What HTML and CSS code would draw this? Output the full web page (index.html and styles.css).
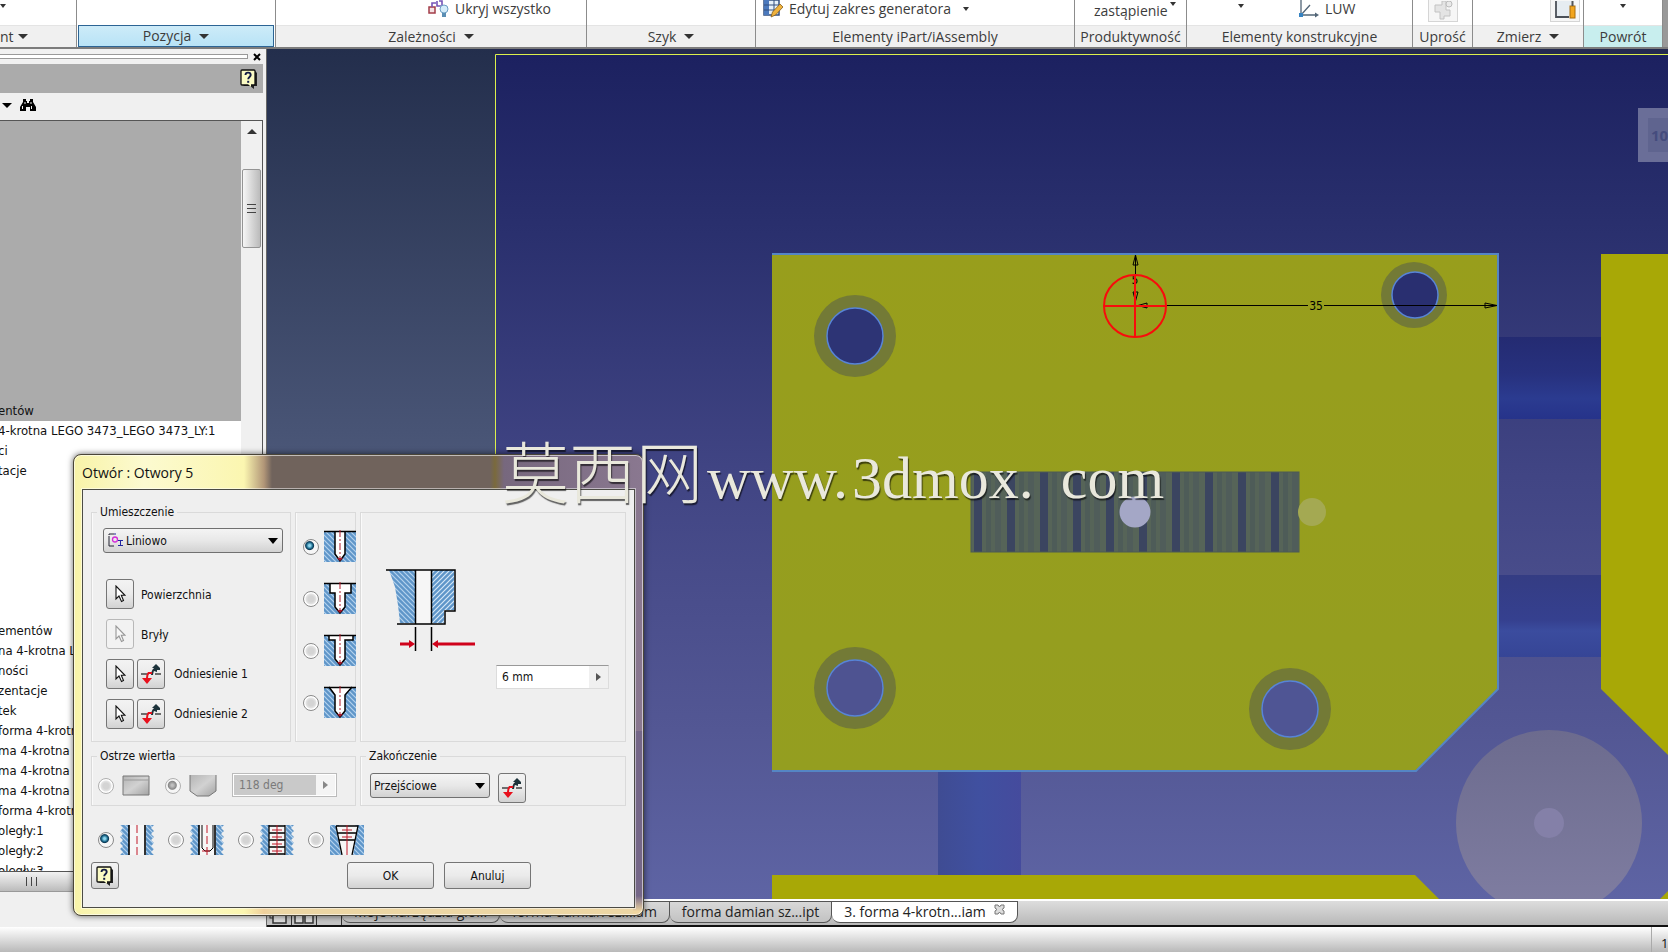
FILE: index.html
```html
<!DOCTYPE html>
<html lang="pl">
<head>
<meta charset="utf-8">
<title>Otwór : Otwory 5</title>
<link rel="stylesheet" href="styles.css">
</head>
<body>
<svg class="defs" aria-hidden="true">
  <defs>
    <pattern id="hatch" width="5" height="5" patternUnits="userSpaceOnUse">
      <rect width="5" height="5" fill="#5f96c9"/>
      <path d="M-1 -1L6 6M-1 4L1 6M4 -1L6 1" stroke="#b4d2ee" stroke-width="1.2"/>
    </pattern>
    <pattern id="hatchBack" width="5" height="5" patternUnits="userSpaceOnUse">
      <rect width="5" height="5" fill="#5f96c9"/>
      <path d="M-1 6L6 -1M-1 1L1 -1M4 6L6 4" stroke="#d6e8f8" stroke-width="1.2"/>
    </pattern>
    <linearGradient id="metal" x1="0" y1="0" x2="1" y2="1">
      <stop offset="0" stop-color="#b4b4b4"/><stop offset=".5" stop-color="#d2d2d2"/><stop offset="1" stop-color="#a2a2a2"/>
    </linearGradient>
    <symbol id="pointer" viewBox="0 0 12 18"><path d="M2 1V14L5 11L7.500 16.500L9.500 15.500L7.300 10.300H11Z" fill="#fff" stroke="#111" stroke-width="1.100"/></symbol>
    <symbol id="flip" viewBox="0 0 22 20">
      <path d="M1 10H8M15 10H21" stroke="#444" stroke-width="1.400"/>
      <path d="M12 11C12.500 7 13 5 15 5" fill="none" stroke="#223038" stroke-width="2"/>
      <path d="M14 7V4H12L16 0L20 4V6H17V8Z" fill="#1d333b"/>
      <path d="M12 9H8.500C7 11 7 12 7 14" fill="none" stroke="#e8101c" stroke-width="2"/>
      <path d="M2 14H12L7 20Z" fill="#e8101c"/>
    </symbol>
    <symbol id="help" viewBox="0 0 18 20">
      <path d="M3 2H15L17 4V17H14V20L10 17H4L2 15Z" fill="#222"/>
      <rect x="1" y="1" width="14" height="15" rx="1" fill="#fbfbc4" stroke="#111" stroke-width="1.300"/>
      <path d="M11 15V18L8 15Z" fill="#fbfbc4"/>
      <path d="M5.500 6C5.500 2.800 10.700 2.800 10.700 6C10.700 8 8.200 8 8.200 10.300" fill="none" stroke="#111a44" stroke-width="1.900"/>
      <rect x="7.200" y="11.800" width="2" height="2" fill="#111a44"/>
    </symbol>
    <symbol id="wall" viewBox="0 0 34 30">
      <path d="M0 0H9V30H0L3 27L0 24L3 21L0 18L3 15L0 12L3 9L0 6L3 3Z" fill="url(#hatch)"/>
      <path d="M25 0H34L31 3L34 6L31 9L34 12L31 15L34 18L31 21L34 24L31 27L34 30H25Z" fill="url(#hatch)"/>
    </symbol>
  </defs>
</svg>

<div class="app">
  <header class="ribbon">
    <section class="panel">
      <div class="tools"><i class="caret small"></i></div>
      <button class="panel-name start">nt <i class="caret"></i></button>
    </section>
    <section class="panel">
      <div class="tools"></div>
      <button class="panel-name active">Pozycja <i class="caret"></i></button>
    </section>
    <section class="panel">
      <div class="tools hide-all">
        <button class="tool"><svg width="21" height="20" viewBox="0 0 21 20"><rect x="1" y="8" width="6" height="6" fill="#f4e2e4" stroke="#a33c48" stroke-width="1.500"/><path d="M4 8V4H8M11 2H14V7H9V2" fill="none" stroke="#7654b8" stroke-width="1.600"/><circle cx="16" cy="10" r="4" fill="#d5edfa" stroke="#6d9fc4"/><rect x="14" y="14" width="4" height="4" fill="#5b8fb4"/></svg>Ukryj wszystko</button>
      </div>
      <button class="panel-name">Zależności <i class="caret"></i></button>
    </section>
    <section class="panel">
      <div class="tools"></div>
      <button class="panel-name">Szyk <i class="caret"></i></button>
    </section>
    <section class="panel">
      <div class="tools generator">
        <button class="tool"><svg width="20" height="19" viewBox="0 0 20 19"><rect x="1" y="0" width="15" height="15" fill="#e6f0fa" stroke="#35507f" stroke-width="1.500"/><path d="M1 0H6V15H1Z" fill="#4b79bd"/><path d="M1 5H16M1 10H16M11 0V15" stroke="#35507f"/><path d="M8 17L9.500 12L17 4L20 7L12.500 15Z" fill="#f0b23c" stroke="#87601c" stroke-width=".8"/></svg>Edytuj zakres generatora<i class="caret small"></i></button>
      </div>
      <div class="panel-name">Elementy iPart/iAssembly</div>
    </section>
    <section class="panel">
      <div class="tools replace"><button class="tool low">zastąpienie<i class="caret small"></i></button></div>
      <div class="panel-name">Produktywność</div>
    </section>
    <section class="panel">
      <div class="tools features">
        <i class="caret small"></i>
        <button class="tool"><svg width="21" height="20" viewBox="0 0 21 20"><path d="M3 0V16H19M3 16L12 6" fill="none" stroke="#526577" stroke-width="1.300"/><rect x="1" y="14" width="4" height="4" fill="#3683c2"/><path d="M17 13.500L21 16L17 18.500Z" fill="#526577"/></svg>LUW</button>
      </div>
      <div class="panel-name">Elementy konstrukcyjne</div>
    </section>
    <section class="panel">
      <div class="tools center"><button class="tool tile" aria-label="Uprość"><svg width="22" height="20" viewBox="0 0 22 20"><path d="M3 4H10V0H14V9H18V15H12V18H8V11H3Z" fill="#e4e4e4" stroke="#c2c2c2"/><circle cx="17" cy="3" r="3" fill="#e9e9e9" stroke="#bbb"/></svg></button></div>
      <div class="panel-name">Uprość</div>
    </section>
    <section class="panel">
      <div class="tools measure"><button class="tool tile" aria-label="Zmierz"><svg width="22" height="20" viewBox="0 0 22 20"><path d="M2 0V16H15" fill="#eef3f7" stroke="#4b5058" stroke-width="1.800"/><path d="M3 0H18V15H3Z" fill="#e6ecf1"/><rect x="16" y="5" width="5" height="12" fill="#f2a51e" stroke="#a86d0d"/><path d="M18.500 0V5" stroke="#555" stroke-width="2"/></svg></button></div>
      <button class="panel-name">Zmierz <i class="caret"></i></button>
    </section>
    <section class="panel">
      <div class="tools center"><i class="caret small"></i></div>
      <div class="panel-name return">Powrót</div>
    </section>
    <div class="ribbon-end"></div>
  </header>

  <div class="work">
    <aside class="browser">
      <div class="grip"><span></span><button aria-label="Zamknij panel"><svg width="8" height="8" viewBox="0 0 8 8"><path d="M1 1L7 7M7 1L1 7" stroke="#000" stroke-width="2"/></svg></button></div>
      <div class="browser-head"><svg width="18" height="20"><use href="#help"/></svg></div>
      <div class="browser-tools">
        <i class="caret dark"></i>
        <svg width="16" height="14" viewBox="0 0 16 14"><path d="M3 1H6V3H7V5H9V3H10V1H13V4L16 9V13H10V9H6V13H0V9L3 4Z"/><path d="M2.500 8V11M11.500 8V11M5 4V6M11 4V6" stroke="#eee"/></svg>
      </div>
      <div class="tree-box">
        <ul class="tree">
          <li class="inactive"><span>entów</span></li>
          <li>4-krotna LEGO 3473_LEGO 3473_LY:1</li>
          <li>ci</li>
          <li>tacje</li>
          <li class="gap"></li>
          <li>ementów</li>
          <li>na 4-krotna LEGO</li>
          <li>ności</li>
          <li>zentacje</li>
          <li>tek</li>
          <li>forma 4-krotna</li>
          <li>ma 4-krotna LEGO</li>
          <li>ma 4-krotna LEGO</li>
          <li>ma 4-krotna LEGO</li>
          <li>forma 4-krotna</li>
          <li>oległy:1</li>
          <li>oległy:2</li>
          <li>oległy:3</li>
        </ul>
        <div class="vscroll"><i class="up"></i><div class="thumb"><i></i><i></i><i></i></div></div>
      </div>
      <div class="hscroll"><i></i><i></i><i></i></div>
    </aside>

    <main class="stage">
      <svg class="model" viewBox="267 49 1401 850" preserveAspectRatio="xMinYMin slice">
        <defs>
          <linearGradient id="outer" x1="0" y1="0" x2="0" y2="1"><stop offset="0" stop-color="#232e4c"/><stop offset=".45" stop-color="#485475"/><stop offset="1" stop-color="#79839f"/></linearGradient>
          <linearGradient id="sky" x1="0" y1="0" x2="0" y2="1"><stop offset="0" stop-color="#1c2160"/><stop offset=".2" stop-color="#292f6d"/><stop offset=".5" stop-color="#414584"/><stop offset=".8" stop-color="#535794"/><stop offset="1" stop-color="#5e64a4"/></linearGradient>
          <linearGradient id="plate" x1="0" y1="0" x2="0" y2="1"><stop offset="0" stop-color="#989e1c"/><stop offset="1" stop-color="#949e20"/></linearGradient>
          <linearGradient id="band1" x1="0" y1="0" x2="0" y2="1"><stop offset="0" stop-color="#242b72"/><stop offset=".45" stop-color="#27317e"/><stop offset=".75" stop-color="#2b3b90"/><stop offset="1" stop-color="#26338a"/></linearGradient>
          <linearGradient id="band2" x1="0" y1="0" x2="0" y2="1"><stop offset="0" stop-color="#343c83"/><stop offset=".55" stop-color="#35408f"/><stop offset=".68" stop-color="#3b4c9e"/><stop offset="1" stop-color="#364596"/></linearGradient>
          <linearGradient id="channel"><stop offset="0" stop-color="#3f4c93"/><stop offset=".5" stop-color="#4050a0"/><stop offset="1" stop-color="#454b9d"/></linearGradient>
          <linearGradient id="disc" x1="0" y1="0" x2="0" y2="1"><stop offset="0" stop-color="#6c6b8e"/><stop offset="1" stop-color="#807ea2"/></linearGradient>
          <pattern id="fins" x="974" y="0" width="33" height="90" patternUnits="userSpaceOnUse"><rect width="33" height="90" fill="#566458"/><rect width="8" height="90" fill="#3b4560"/><rect x="12" width="5" height="90" fill="#4e5c58"/><rect x="21" width="6" height="90" fill="#505d5a"/></pattern>
        </defs>
        <rect x="267" y="48" width="1401" height="851" fill="url(#outer)"/>
        <rect x="492" y="48" width="1176" height="6" fill="#242a50"/>
        <rect x="495" y="54" width="1173" height="845" fill="url(#sky)"/>
        <path d="M495.500 899V54.500H1668" fill="none" stroke="#dcf04c"/>
        <rect x="1499" y="337" width="102" height="82" fill="url(#band1)"/>
        <rect x="1499" y="575" width="102" height="82" fill="url(#band2)"/>
        <rect x="938" y="772" width="83" height="103" fill="url(#channel)"/>
        <path d="M1601 254H1668V755L1601 689Z" fill="#a8a806"/>
        <path d="M772 875H1415L1439 899H772Z" fill="#a8a806"/>
        <path d="M1660 899L1668 891V899Z" fill="#a8a806"/>
        <circle cx="1549" cy="823" r="93" fill="url(#disc)"/>
        <circle cx="1549" cy="823" r="15" fill="#8480a8"/>
        <path d="M772 254H1498V689L1416 771H772Z" fill="url(#plate)"/>
        <path d="M772 254H1498V689L1416 771H772" fill="none" stroke="#5585c4" stroke-width="2"/>
        <g fill="#737a36"><circle cx="855" cy="336" r="41"/><circle cx="1414" cy="295" r="33"/><circle cx="855" cy="688" r="41"/><circle cx="1290" cy="709" r="41"/></g>
        <g stroke="#5784d8" stroke-width="1.500"><circle cx="855" cy="336" r="28" fill="#2d3475"/><circle cx="1415" cy="295" r="23" fill="#292f70"/><circle cx="855" cy="688" r="28" fill="#4e5391"/><circle cx="1290" cy="709" r="28" fill="#4f5594"/></g>
        <rect x="971" y="472" width="328" height="80" fill="url(#fins)" stroke="#4d5a54"/>
        <circle cx="1312" cy="512" r="14" fill="#a4a952"/>
        <circle cx="1135" cy="512" r="15.500" fill="#a4a7c6"/>
        <g stroke="#000" fill="none"><path d="M1135.500 255V274M1135.500 286V300M1139 305.500H1308M1324 305.500H1497"/><path d="M1135.500 255L1133 265H1138ZM1135.500 301L1133 292H1138ZM1138 305.500L1147 303V308ZM1497 305.500L1485 303V308Z"/></g>
        <text class="dim" x="1135" y="284">5</text>
        <text class="dim" x="1316" y="310">35</text>
        <g stroke="#f80c0c" stroke-width="2" fill="none"><circle cx="1135" cy="306" r="31"/><path d="M1104 306H1166M1135 275V337"/></g>
        <rect x="1638" y="108" width="40" height="54" fill="#6a6e98"/>
        <rect x="1648" y="118" width="30" height="34" fill="#5f648f"/>
        <text class="cube" x="1651" y="141">10</text>
      </svg>
      <nav class="tabs">
        <span class="tab-tool"><svg width="20" height="16" viewBox="0 0 20 16"><rect x="1" y="1" width="12" height="8" fill="none" stroke="#333"/><rect x="4" y="4" width="13" height="10" fill="#ddd" stroke="#333" stroke-width="1.500"/></svg></span>
        <span class="tab-tool"><svg width="20" height="16" viewBox="0 0 20 16"><rect x="1" y="4" width="8" height="10" fill="#ddd" stroke="#333" stroke-width="1.500"/><rect x="11" y="4" width="8" height="10" fill="#ddd" stroke="#333" stroke-width="1.500"/></svg></span>
        <span class="tab-tool"></span>
        <a href="#" class="tab">Moje narzędzia gło...</a>
        <a href="#" class="tab">forma damian sz...iam</a>
        <a href="#" class="tab">forma damian sz...ipt</a>
        <a href="#" class="tab current">3. forma 4-krotn...iam <svg width="11" height="11" viewBox="0 0 11 11"><path d="M1 1H4L5.500 3L7 1H10V4L8 5.500L10 7V10H7L5.500 8L4 10H1V7L3 5.500L1 4Z" fill="#ddd" stroke="#777"/></svg></a>
      </nav>
    </main>
  </div>
  <footer class="status"><span>1</span></footer>
</div>

<form class="dialog" onsubmit="return false">
  <h1>Otwór : Otwory 5</h1>
  <div class="dialog-body">
    <div class="upper">
      <fieldset class="placement">
        <legend>Umieszczenie</legend>
        <div class="select wide">
          <svg width="15" height="14" viewBox="0 0 15 14"><path d="M1 3V13H6M1 1V2M1 1H6" fill="none" stroke="#223"/><circle cx="7" cy="6.500" r="2.500" fill="none" stroke="#d32bd8" stroke-width="1.300"/><path d="M10 7.500H15M10 12.500H15M12.500 8V12M7 0V2" stroke="#2226a0"/></svg>
          <select aria-label="Umieszczenie"><option>Liniowo</option></select>
        </div>
        <div class="picks">
          <div class="pick"><button aria-label="Wybierz powierzchnię"><svg width="12" height="18"><use href="#pointer"/></svg></button><span>Powierzchnia</span></div>
          <div class="pick"><button disabled aria-label="Wybierz bryły"><svg width="12" height="18"><use href="#pointer"/></svg></button><span>Bryły</span></div>
          <div class="pick"><button aria-label="Wybierz odniesienie 1"><svg width="12" height="18"><use href="#pointer"/></svg></button><button aria-label="Odwróć 1"><svg width="22" height="20"><use href="#flip"/></svg></button><span class="far">Odniesienie 1</span></div>
          <div class="pick"><button aria-label="Wybierz odniesienie 2"><svg width="12" height="18"><use href="#pointer"/></svg></button><button aria-label="Odwróć 2"><svg width="22" height="20"><use href="#flip"/></svg></button><span class="far">Odniesienie 2</span></div>
        </div>
      </fieldset>
      <fieldset class="shapes" aria-label="Kształt otworu">
        <label><input type="radio" name="shape" checked aria-label="Wiercony"><svg width="32" height="33" viewBox="0 0 32 33"><rect y="1" width="32" height="31" fill="url(#hatch)"/><path d="M11 1V24L16 31L21 24V1" fill="#fff" stroke="#000" stroke-width="1.500"/><path d="M0 1.500H32" stroke="#000" stroke-width="1.500"/><path d="M13 28H19L16 31Z" fill="#a01c30"/><path d="M16 0V30" stroke="#b01828" stroke-dasharray="7 2 2 2"/></svg></label>
        <label><input type="radio" name="shape" aria-label="Pogłębiony walcowo"><svg width="32" height="33" viewBox="0 0 32 33"><rect y="1" width="32" height="31" fill="url(#hatch)"/><path d="M6 1V11H11V25L16 31L21 25V11H27V1" fill="#fff" stroke="#000" stroke-width="1.500"/><path d="M0 1.500H32" stroke="#000" stroke-width="1.500"/><path d="M13 28H19L16 31Z" fill="#a01c30"/><path d="M16 0V30" stroke="#b01828" stroke-dasharray="7 2 2 2"/></svg></label>
        <label><input type="radio" name="shape" aria-label="Pogłębiony płasko"><svg width="32" height="33" viewBox="0 0 32 33"><rect y="1" width="32" height="31" fill="url(#hatch)"/><path d="M5 1V6H11V25L16 31L21 25V6H29V1" fill="#fff" stroke="#000" stroke-width="1.500"/><path d="M0 1.500H32" stroke="#000" stroke-width="1.500"/><path d="M13 28H19L16 31Z" fill="#a01c30"/><path d="M16 0V30" stroke="#b01828" stroke-dasharray="7 2 2 2"/></svg></label>
        <label><input type="radio" name="shape" aria-label="Pogłębiony stożkowo"><svg width="32" height="33" viewBox="0 0 32 33"><rect y="1" width="32" height="31" fill="url(#hatch)"/><path d="M5 1L11 9V25L16 31L21 25V9L28 1" fill="#fff" stroke="#000" stroke-width="1.500"/><path d="M0 1.500H32" stroke="#000" stroke-width="1.500"/><path d="M13 28H19L16 31Z" fill="#a01c30"/><path d="M16 0V30" stroke="#b01828" stroke-dasharray="7 2 2 2"/></svg></label>
      </fieldset>
      <fieldset class="preview" aria-label="Wymiary">
        <svg width="92" height="84" viewBox="0 0 92 84">
          <path d="M3 1H29V54H14L12 36L9 18Z" fill="url(#hatch)"/>
          <path d="M45 1H68V41H58V54H45Z" fill="url(#hatchBack)"/>
          <path d="M29 1H45V54H29Z" fill="#f6f6f6"/>
          <path d="M0 1H69V42H59V55H11M29.500 1V55M45.500 1V55M29.500 58V82M45.500 58V82" fill="none" stroke="#000" stroke-width="1.500"/>
          <path d="M14 75H25M49 75H89" stroke="#d0021b" stroke-width="3"/>
          <path d="M23 71L29 75L23 79ZM52 71L46 75L52 79Z" fill="#d0021b"/>
        </svg>
        <div class="field"><input type="text" value="6 mm" aria-label="Średnica"><button aria-label="Opcje średnicy"></button></div>
      </fieldset>
    </div>
    <div class="middle">
      <fieldset class="drill">
        <legend>Ostrze wiertła</legend>
        <div class="line">
          <label><input type="radio" name="tip" disabled aria-label="Płaskie"><svg width="28" height="22" viewBox="0 0 28 22"><path d="M1 1H27V20H1Z" fill="url(#metal)" stroke="#777"/><path d="M1 5H27" stroke="#999"/></svg></label>
          <label><input type="radio" name="tip" checked disabled aria-label="Kątowe"><svg width="28" height="24" viewBox="0 0 28 24"><path d="M1 1H27V17L20 22H8L1 17Z" fill="url(#metal)"/><path d="M1 1V17L8 22H20L27 17V1" fill="none" stroke="#777"/></svg></label>
          <div class="field off"><input type="text" value="118 deg" disabled aria-label="Kąt ostrza"><button disabled aria-label="Opcje kąta"></button></div>
        </div>
      </fieldset>
      <fieldset class="finish">
        <legend>Zakończenie</legend>
        <div class="line">
          <div class="select"><select aria-label="Zakończenie"><option>Przejściowe</option></select></div>
          <button aria-label="Odwróć kierunek" class="flip"><svg width="22" height="20"><use href="#flip"/></svg></button>
        </div>
      </fieldset>
    </div>
    <div class="kinds">
      <label><input type="radio" name="kind" checked aria-label="Zwykły otwór"><svg width="34" height="30" viewBox="0 0 34 30"><use href="#wall"/><path d="M9 0H26V30H9Z" fill="#f6f6f6"/><path d="M9 0V30M25 0V30" stroke="#000" stroke-width="1.600"/><path d="M17 0V30" stroke="#c01828" stroke-dasharray="8 3"/></svg></label>
      <label><input type="radio" name="kind" aria-label="Otwór przejściowy"><svg width="34" height="30" viewBox="0 0 34 30"><use href="#wall"/><path d="M9 0H26V30H9Z" fill="#f6f6f6"/><path d="M9 0V30M25 0V30" stroke="#000" stroke-width="1.600"/><path d="M12 0V23L15 26H20L23 23V0" fill="none" stroke="#000"/><path d="M17 0V30M12 26H22" stroke="#c01828" stroke-dasharray="8 3"/></svg></label>
      <label><input type="radio" name="kind" aria-label="Otwór gwintowany"><svg width="34" height="30" viewBox="0 0 34 30"><use href="#wall"/><path d="M9 0H26V30H9Z" fill="#f6f6f6"/><path d="M9 0V30M25 0V30M9 1H25M9 8H25M9 15H25M9 22H25M9 29H25" stroke="#000" stroke-width="1.300"/><path d="M17 0V30M12 5H22M12 12H22M12 19H22M12 26H22" stroke="#c01828"/></svg></label>
      <label><input type="radio" name="kind" aria-label="Gwint stożkowy"><svg width="34" height="30" viewBox="0 0 34 30"><use href="#wall"/><path d="M7 0L12 30H0V0Z" fill="url(#hatch)"/><path d="M27 0L22 30H34V0Z" fill="url(#hatch)"/><path d="M6 1H28L23 30H11Z" fill="#f6f6f6"/><path d="M6 1H28L22 30M6 1L12 30M8 8H26M9 15H25" fill="none" stroke="#000" stroke-width="1.300"/><path d="M17 0V30M12 5H22M12 12H22" stroke="#c01828"/></svg></label>
    </div>
    <div class="actions">
      <button aria-label="Pomoc" class="help"><svg width="18" height="20"><use href="#help"/></svg></button>
      <button class="text">OK</button>
      <button class="text">Anuluj</button>
    </div>
  </div>
</form>

<div class="watermark" lang="zh"><span class="han">莫西网</span><span>www.</span><span class="name">3dmox.</span><span class="last">com</span></div>
</body>
</html>
```
FILE: styles.css
```css
* { box-sizing: border-box; }
body {
  margin: 0;
  overflow: hidden;
  background: #f0f0f0;
  color: #111;
  font: 12px/16px "DejaVu Sans Condensed", "Noto Sans", sans-serif;
}
button, input, select { font: inherit; color: inherit; margin: 0; }
button { padding: 0; border: 0; background: none; }
svg { flex: none; display: block; }
.defs { position: absolute; width: 0; height: 0; }
.app { display: flex; flex-direction: column; height: 100vh; }

/* Ribbon */
.ribbon {
  flex: none;
  display: grid;
  grid-template-columns: 77fr 199fr 311fr 169fr 319fr 112fr 226fr 60fr 111fr 79fr 5fr;
  height: 49px;
  border-bottom: 2px solid #7c7c7c;
  background: #fff;
  color: #3c3c3c;
  font: 14px/20px "Open Sans", "Noto Sans", sans-serif;
}
.panel { display: flex; flex-direction: column; min-width: 0; border-right: 1px solid #8c8c8c; }
.tools { display: flex; align-items: flex-start; height: 25px; overflow: hidden; }
.tools > .caret { margin-top: 4px; }
.tool { display: flex; align-items: center; gap: 6px; height: 18px; white-space: nowrap; }
.low { margin-top: 2px; gap: 2px; }
.low .caret { align-self: flex-start; }
.tile { height: 22px; padding: 0 3px; border: 1px solid #d5d5d5; border-top: 0; background: #f6f6f6; }
.center { justify-content: center; }
.replace { padding-left: 19px; }
.hide-all { padding-left: 152px; }
.generator { padding-left: 7px; }
.generator .caret { margin-left: 6px; }
.features { padding-left: 51px; gap: 54px; }
.measure { padding-left: 77px; }
.panel-name {
  display: flex;
  flex: 1;
  align-items: center;
  justify-content: center;
  gap: 8px;
  border-top: 1px solid #e4e4e4;
  background: #f0f0f0;
  white-space: nowrap;
}
.start { justify-content: flex-start; gap: 4px; }
.active { margin: 0 1px; border: 1px solid #2c6494; background: linear-gradient(#cdebf8, #b8e3f6); }
.return { background: #c8eeee; }
.ribbon-end { background: #999; }
.caret { flex: none; border: 5px solid transparent; border-top-color: #333; border-bottom: 0; }
.small { border-width: 3px; border-bottom: 0; border-top-width: 4px; }
.dark { border-top-color: #000; }

/* Browser panel */
.work { flex: 1; display: grid; grid-template-columns: 267px minmax(0, 1fr); min-height: 0; }
.browser {
  display: flex;
  flex-direction: column;
  min-height: 0;
  padding: 0 3px 35px 0;
  border-right: 1px solid #666;
  background: #f0f0f0;
}
.grip { display: flex; align-items: center; gap: 5px; height: 15px; }
.grip span { flex: 1; height: 5px; border: 1px solid #999; border-left: 0; background: #fff; }
.grip button { width: 10px; }
.browser-head { display: flex; align-items: center; justify-content: flex-end; height: 29px; padding-right: 5px; background: #ababab; }
.browser-tools { display: flex; align-items: center; gap: 8px; height: 27px; padding: 0 0 3px 2px; }
.tree-box { flex: 1; display: grid; grid-template-columns: minmax(0, 1fr) 21px; min-height: 0; border: 1px solid #555; border-left: 0; }
.tree { margin: 0; padding: 0; overflow: hidden; list-style: none; background: #fff; font-size: 13px; white-space: nowrap; }
.tree li { height: 20px; line-height: 20px; text-indent: -2px; }
.tree .inactive { display: flex; align-items: flex-end; height: 300px; background: #ababab; }
.tree .gap { height: 140px; }
.vscroll { display: flex; flex-direction: column; align-items: center; padding-top: 8px; background: #f0f0f0; }
.up { border: 5px solid transparent; border-bottom-color: #333; border-top: 0; }
.thumb {
  display: flex;
  flex-direction: column;
  align-items: center;
  justify-content: center;
  gap: 3px;
  width: 19px;
  height: 79px;
  margin-top: 35px;
  border: 1px solid #949494;
  border-radius: 2px;
  background: linear-gradient(90deg, #f6f6f6, #d8d8d8 50%, #bbb);
}
.thumb i { width: 9px; height: 1px; background: #444; }
.hscroll {
  display: flex;
  gap: 4px;
  align-items: center;
  height: 20px;
  padding-left: 26px;
  border: 1px solid #999;
  border-left: 0;
  border-top: 0;
  background: linear-gradient(#f2f2f2, #d8d8d8 50%, #bbb);
}
.hscroll i { width: 1px; height: 9px; background: #444; }

/* Model view */
.stage { display: flex; flex-direction: column; min-width: 0; min-height: 0; }
.model { flex: 1 1 0; width: 100%; min-height: 0; }
.dim { font: 12px "DejaVu Sans Condensed", sans-serif; text-anchor: middle; }
.cube { font: bold 15px "Open Sans", sans-serif; fill: #454c7e; }
.tabs {
  display: flex;
  height: 28px;
  padding-bottom: 2px;
  border-top: 2px solid #fff;
  border-bottom: 2px solid #111;
  background: linear-gradient(#ddd, #b8b8b8);
  font: 14px/22px "Open Sans", "Noto Sans", sans-serif;
}
.tab-tool { display: flex; align-items: flex-end; justify-content: center; width: 25px; margin-bottom: -2px; border-right: 1px solid #333; background: #c4c4c4; }
.tab {
  display: flex;
  align-items: center;
  gap: 8px;
  padding: 0 12px;
  border: 1px solid #555;
  border-left: 0;
  border-radius: 0 0 8px 8px;
  background: linear-gradient(#d8d8d8, #c2c2c2);
  color: #222;
  text-decoration: none;
  white-space: nowrap;
}
.current { background: #fff; }
.current svg { margin-bottom: 6px; }
.status {
  flex: none;
  display: flex;
  justify-content: flex-end;
  height: 25px;
  background: linear-gradient(#fff, #b9b9b9);
  font: 13px/32px "Open Sans", sans-serif;
}
.status span { width: 17px; padding-left: 9px; border-left: 1px solid #aaa; }

/* Dialog window floating over the workspace */
.dialog {
  position: absolute;
  left: 73px;
  top: 454px;
  width: 571px;
  padding: 0 8px 7px;
  border: 1px solid #4a4538;
  border-radius: 8px;
  background:
    linear-gradient(90deg, #f8f3a8, #fcfad0 70px, #fbf6b0 170px, #f3c9937f 190px, #70635c00 198px) 0 0 / 100% 100%,
    linear-gradient(90deg, #70635c 416px, #7a6a3c 421px, #77687e 430px, #8a7890) 0 0 / 100% 60% no-repeat,
    linear-gradient(#756788, #756788 90%, #f0d6a0 98%) 100% 100% / 10px 42% no-repeat,
    #ecd6a4;
  box-shadow: 0 0 6px #0009, inset 0 0 0 1px #ffffff90;
}
.dialog h1 { margin: 0; padding-top: 7px; height: 34px; font: 14px/22px "Open Sans", "Noto Sans", sans-serif; }
.dialog-body {
  display: flex;
  flex-direction: column;
  padding: 14px 8px 18px 8px;
  border: 1px solid #4b4b45;
  background: #efefef;
  box-shadow: 0 0 0 1px #ffffff80;
}
fieldset { min-width: 0; margin: 0; padding: 0; border: 1px solid #dadada; box-shadow: inset 1px 0 #fafafa; }
legend { margin-left: 5px; padding: 0 3px; }
.upper { display: grid; grid-template-columns: 200px 61px minmax(0, 1fr); gap: 4px; height: 238px; }
.placement { padding: 8px 0 0; }
.shapes, .preview { margin-top: 8px; }
.select { position: relative; }
.select select {
  appearance: none;
  width: 100%;
  height: 25px;
  padding: 0 3px;
  border: 1px solid #707070;
  border-radius: 3px;
  background: linear-gradient(#f4f4f4, #e8e8e8 50%, #d2d2d2);
}
.select::after { content: ""; position: absolute; right: 5px; top: 10px; border: 5px solid transparent; border-top: 6px solid #000; border-bottom: 0; pointer-events: none; }
.select svg { position: absolute; left: 5px; top: 5px; }
.wide { margin: 0 7px 0 11px; }
.wide select { padding-left: 22px; }
.picks { display: grid; gap: 10px; padding: 26px 0 0 14px; }
.pick { display: flex; align-items: center; gap: 3px; }
.pick span { padding: 2px 0 0 4px; }
.pick .far { padding: 0 0 0 6px; }
.pick button, .flip, .help, .text {
  display: flex;
  align-items: center;
  justify-content: center;
  width: 28px;
  height: 30px;
  border: 1px solid #757575;
  border-radius: 3px;
  background: linear-gradient(#f3f3f3, #ebebeb 50%, #d2d2d2);
}
.pick button:disabled { border-color: #b8b8b8; background: #f2f2f2; }
.pick button:disabled svg { opacity: .4; }
label { display: flex; align-items: center; }
input[type="radio"] {
  appearance: none;
  flex: none;
  width: 16px;
  height: 16px;
  border: 1px solid #8a8a8a;
  border-radius: 50%;
  background: radial-gradient(circle, #d4d4d4 3px, #e4e4e4 5px, #fff 6px);
}
input[type="radio"]:checked { background: radial-gradient(circle at 40% 40%, #8fd6ee 1px, #1c6a8c 3px, #0e3a56 4px, #f6f6f6 5px); }
input[type="radio"]:disabled { border-color: #b0b0b0; }
input[type="radio"]:checked:disabled { background: radial-gradient(circle at 45% 45%, #c0c0c0 1px, #888 4px, #f6f6f6 5px); }
.shapes { display: flex; flex-direction: column; gap: 19px; padding: 17px 0 0 7px; }
.shapes label { gap: 5px; }
.preview { display: flex; flex-direction: column; padding: 56px 16px 0 25px; }
.field {
  display: flex;
  width: 113px;
  height: 24px;
  border: 1px solid #dcdcdc;
  border-top-color: #999;
  background: #fff;
}
.field input { flex: 1; min-width: 0; padding: 0 5px; border: 0; background: none; }
.field button { width: 19px; background: #f0f0f0; }
.field button::after { content: ""; display: block; width: 0; margin: auto; border: 4px solid transparent; border-left: 5px solid #555; border-right: 0; }
.preview .field { align-self: flex-end; margin-top: 12px; }
.off { width: 105px; margin-top: 2px; padding: 1px; border-color: #bbb; }
.off input { background: #c9c9c9; color: #7a7a7a; }
.off button { opacity: .7; }
.middle { display: grid; grid-template-columns: 265px minmax(0, 1fr); gap: 4px; margin-top: 6px; height: 58px; }
.line { display: flex; }
.drill .line { gap: 15px; padding: 7px 0 0 6px; }
.drill label { gap: 8px; height: 30px; }
.finish .line { gap: 8px; padding: 9px 0 0 9px; }
.finish .select { width: 120px; }
.kinds { display: flex; gap: 14px; padding: 19px 0 0 7px; }
.kinds label { gap: 6px; }
.actions { display: flex; gap: 10px; margin-top: 7px; }
.actions button { height: 27px; }
.text { width: 87px; }
.help { margin-right: 218px; }

/* Watermark laid over the whole window */
.watermark {
  position: absolute;
  left: 502px;
  top: 429px;
  display: flex;
  align-items: baseline;
  color: #e9e8dc;
  font: 60px/80px "Liberation Serif", serif;
  text-shadow: 1px 2px 1px #0009;
  pointer-events: none;
  white-space: nowrap;
}
.han { width: 205px; font: 300 67px/80px "Noto Sans CJK SC", sans-serif; }
.name { margin-left: 4px; }
.last { margin-left: 27px; }
```
